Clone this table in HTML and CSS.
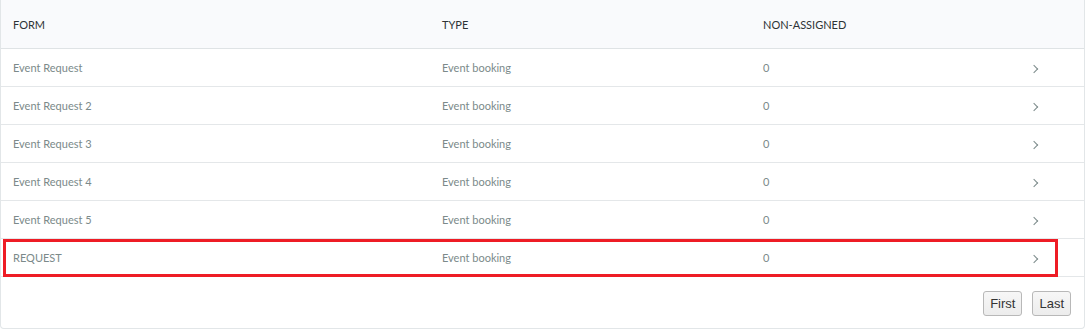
FILE: index.html
```html
<!DOCTYPE html>
<html>
<head>
    <meta charset="UTF-8">
    <title>Forms</title>
    <link rel="stylesheet" href="styles.css">
</head>
<body>
    <div class="panel">
        <table class="forms">
            <thead>
                <tr>
                    <th class="col-form">FORM</th>
                    <th class="col-type">TYPE</th>
                    <th class="col-count">NON-ASSIGNED</th>
                    <th class="col-go"></th>
                </tr>
            </thead>
            <tbody>
                <tr>
                    <td>Event Request</td>
                    <td>Event booking</td>
                    <td>0</td>
                    <td class="col-go"><span class="chevron"></span></td>
                </tr>
                <tr>
                    <td>Event Request 2</td>
                    <td>Event booking</td>
                    <td>0</td>
                    <td class="col-go"><span class="chevron"></span></td>
                </tr>
                <tr>
                    <td>Event Request 3</td>
                    <td>Event booking</td>
                    <td>0</td>
                    <td class="col-go"><span class="chevron"></span></td>
                </tr>
                <tr>
                    <td>Event Request 4</td>
                    <td>Event booking</td>
                    <td>0</td>
                    <td class="col-go"><span class="chevron"></span></td>
                </tr>
                <tr>
                    <td>Event Request 5</td>
                    <td>Event booking</td>
                    <td>0</td>
                    <td class="col-go"><span class="chevron"></span></td>
                </tr>
                <tr class="marked">
                    <td>REQUEST</td>
                    <td>Event booking</td>
                    <td>0</td>
                    <td class="col-go"><span class="chevron"></span></td>
                </tr>
            </tbody>
        </table>
        <div class="pager">
            <button>First</button>
            <button>Last</button>
        </div>
    </div>
</body>
</html>
```

FILE: styles.css
```css
body {
    margin: 0;
    font-family: Lato, "Open Sans", sans-serif;
    background: #fff;
}
.panel {
    border: 1px solid #e2e6e8;
    border-top: none;
    border-radius: 0 0 4px 4px;
    height: 329px;
    box-sizing: border-box;
}
.forms {
    width: 100%;
    border-collapse: collapse;
    table-layout: fixed;
}
.forms th {
    height: 48px;
    padding: 0 0 0 12px;
    background: #f9fafc;
    border-bottom: 1px solid #dfe3e5;
    text-align: left;
    font-weight: normal;
    font-size: 11px;
    color: #2e3336;
}
.forms td {
    height: 37px;
    padding: 0 0 0 12px;
    border-bottom: 1px solid #e4e7e9;
    font-size: 11px;
    color: #7b8a8a;
}
.col-form { width: 417px; }
.col-type { width: 309px; }
.col-count { width: 258px; }
.forms .col-go {
    padding-left: 10px;
}
.chevron {
    display: inline-block;
    width: 5px;
    height: 5px;
    border-top: 1.5px solid #7b8a8a;
    border-right: 1.5px solid #7b8a8a;
    transform: rotate(45deg);
    margin-top: 1px;
}
.marked td {
    position: relative;
}
.marked td:first-child::after {
    content: "";
    position: absolute;
    left: 2px;
    top: 0;
    width: 1055px;
    height: 38px;
    border: 3px solid #ee1c25;
    box-sizing: border-box;
    pointer-events: none;
}
.pager {
    display: flex;
    justify-content: flex-end;
    gap: 10px;
    padding: 14px 13px 0 0;
}
.pager button {
    font-family: Arial, "Liberation Sans", sans-serif;
    font-size: 13px;
    color: #333;
    height: 25px;
    padding: 0 6px;
    background: linear-gradient(#f7f7f7, #ececec);
    border: 1px solid #b8b8b8;
    border-radius: 3px;
}
```
